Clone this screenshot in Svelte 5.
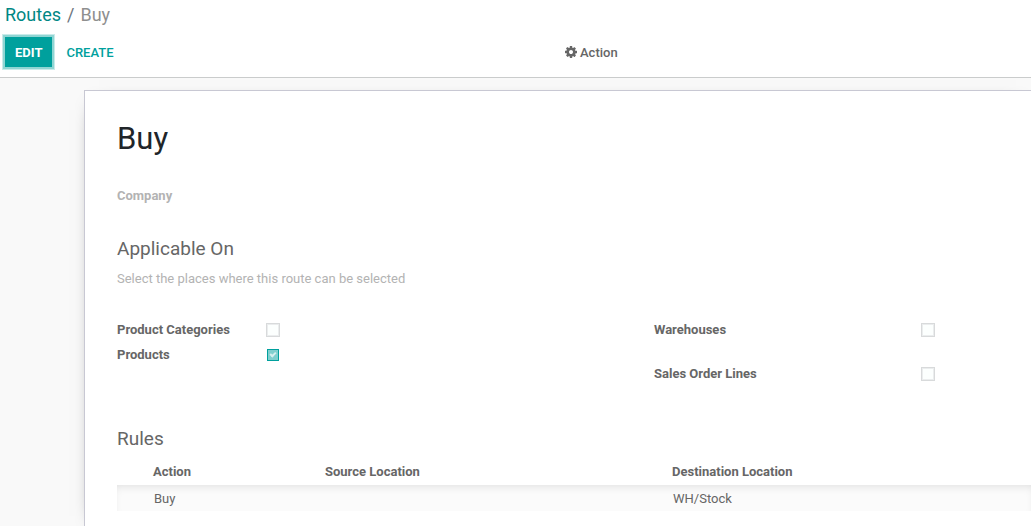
<script lang="ts">
  interface Toggle {
    id: string;
    label: string;
    checked: boolean;
  }

  const productToggles: Toggle[] = [
    { id: 'product_categ_selectable', label: 'Product Categories', checked: false },
    { id: 'product_selectable', label: 'Products', checked: true },
  ];

  const salesToggles: Toggle[] = [
    { id: 'warehouse_selectable', label: 'Warehouses', checked: false },
    { id: 'sale_selectable', label: 'Sales Order Lines', checked: false },
  ];

  const rules = [{ action: 'Buy', source: '', destination: 'WH/Stock' }];
</script>

{#snippet toggleRow(t: Toggle)}
  <div class="field">
    <label for={t.id}>{t.label}</label>
    <input id={t.id} type="checkbox" checked={t.checked} />
  </div>
{/snippet}

<div class="view">
  <header class="control-panel">
    <nav class="breadcrumb">
      <a href="#routes">Routes</a>
      <span class="sep">/</span>
      <span class="current">Buy</span>
    </nav>
    <div class="toolbar">
      <div class="buttons">
        <button class="btn btn-primary">EDIT</button>
        <button class="btn btn-link">CREATE</button>
      </div>
      <button class="btn btn-action">
        <svg viewBox="0 0 1536 1536" width="12" height="12" aria-hidden="true">
          <path d="M1024 768q0-106-75-181t-181-75-181 75-75 181 75 181 181 75 181-75 75-181zm512-109v222q0 12-8 23t-20 13l-185 28q-19 54-39 91 35 50 107 138 10 12 10 25t-9 23q-27 37-99 108t-94 71q-12 0-26-9l-138-108q-44 23-91 38-16 136-29 186-7 28-36 28H657q-14 0-24.500-8.500T621 1506l-28-184q-49-16-90-37l-141 107q-10 9-25 9-14 0-25-11-126-114-165-168-7-10-7-23 0-12 8-23 15-21 51-66.500t54-70.500q-27-50-41-99L29 913q-13-2-21-12.500T0 877V655q0-12 8-23t19-13l186-28q14-46 39-92-40-57-107-138-10-12-10-24 0-10 9-23 26-36 98.500-107.500T337 135q13 0 26 10l138 107q44-23 91-38 16-136 29-186 7-28 36-28h222q14 0 24.500 8.500T915 30l28 184q49 16 90 37l142-107q9-9 24-9 13 0 25 10 129 119 165 170 7 8 7 22 0 12-8 23-15 21-51 66.500t-54 70.500q26 50 41 98l183 28q13 2 21 12.500t8 23.500z" />
        </svg>
        Action
      </button>
    </div>
  </header>

  <main class="content">
    <section class="sheet">
      <h1>Buy</h1>
      <div class="company">Company</div>

      <h2>Applicable On</h2>
      <p class="hint">Select the places where this route can be selected</p>

      <div class="groups">
        <div class="group group-products">
          {#each productToggles as t}
            {@render toggleRow(t)}
          {/each}
        </div>
        <div class="group group-sales">
          {#each salesToggles as t}
            {@render toggleRow(t)}
          {/each}
        </div>
      </div>

      <h2>Rules</h2>
      <table>
        <colgroup>
          <col class="col-handle" />
          <col class="col-action" />
          <col class="col-source" />
          <col />
        </colgroup>
        <thead>
          <tr>
            <th></th>
            <th>Action</th>
            <th>Source Location</th>
            <th>Destination Location</th>
          </tr>
        </thead>
        <tbody>
          {#each rules as rule}
            <tr>
              <td></td>
              <td>{rule.action}</td>
              <td>{rule.source}</td>
              <td>{rule.destination}</td>
            </tr>
          {/each}
        </tbody>
      </table>
    </section>
  </main>
</div>

<style>
  :global(body) {
    margin: 0;
    background: #fff;
  }
  .view {
    display: flex;
    flex-direction: column;
    min-height: 100vh;
    font-family: Roboto, "Liberation Sans", sans-serif;
    font-size: 13px;
    line-height: 20px;
    color: #666;
  }

  .control-panel {
    padding: 2px 5px 10px;
    border-bottom: 1px solid #cacccc;
    background: #fff;
  }
  .breadcrumb {
    display: flex;
    gap: 6px;
    margin-bottom: 9px;
    font-size: 18px;
    line-height: 26px;
  }
  .breadcrumb a {
    color: #008784;
    text-decoration: none;
  }
  .sep { color: #6c757d; }
  .current { color: #8f8f8f; }
  .toolbar {
    display: grid;
    grid-template-columns: 560fr 461fr;
    align-items: center;
  }
  .buttons {
    display: flex;
    gap: 4px;
  }
  .btn {
    height: 30px;
    padding: 0 10px;
    border: none;
    background: none;
    font-family: inherit;
    font-size: 13px;
    font-weight: 500;
    cursor: pointer;
  }
  .btn-primary {
    background: #00a09d;
    color: #fff;
    font-weight: 700;
    box-shadow: 0 0 0 2px #8fd5d3, 0 0 0 3px #c9ebea;
  }
  .btn-link { color: #00a09d; }
  .btn-action {
    display: flex;
    align-items: center;
    justify-self: start;
    gap: 3px;
    padding: 0;
    color: #666;
  }
  .btn-action svg { fill: #666; }

  .content {
    display: flex;
    flex: 1;
    flex-direction: column;
    padding: 12px 0 0 84px;
    background: #f9f9f9;
    overflow: hidden;
  }
  .sheet {
    flex: 1;
    padding: 25px 0 14px 32px;
    border: 1px solid #c8c8d3;
    border-width: 1px 0 0 1px;
    background: #fff;
    box-shadow: 0 5px 20px -15px #000;
  }
  h1 {
    margin: 0 0 27px;
    font-size: 31px;
    font-weight: 400;
    line-height: 46px;
    color: #212529;
  }
  .company {
    margin-bottom: 31px;
    font-weight: 700;
    line-height: 14px;
    color: #b3b3b3;
  }
  h2 {
    margin: 0;
    font-size: 19px;
    font-weight: 400;
    line-height: 30px;
    color: #666;
  }
  .hint {
    margin: 5px 0 31px;
    color: #b3b3b3;
  }

  .groups {
    display: grid;
    grid-template-columns: 537fr 377fr;
    margin-bottom: 40px;
  }
  .group {
    display: grid;
    align-content: start;
  }
  .group-products { gap: 5px; }
  .group-sales { gap: 24px; }
  .field {
    display: grid;
    grid-template-columns: 149px 1fr;
    align-items: center;
    height: 20px;
  }
  .group-sales .field { grid-template-columns: 267px 1fr; }
  .field label { font-weight: 700; }
  input[type="checkbox"] {
    position: relative;
    appearance: none;
    width: 14px;
    height: 14px;
    margin: 0;
    border: 1px solid #d8dadb;
    background: #fcfffe;
    box-shadow: inset 0 0 0 1px #ebedee;
  }
  input[type="checkbox"]:checked {
    width: 12px;
    height: 12px;
    margin-left: 1px;
    border-color: #00a09d;
    background: #7fcfce;
    box-shadow: none;
  }
  input[type="checkbox"]:checked::after {
    content: "";
    position: absolute;
    left: 2px;
    top: 2px;
    width: 4px;
    height: 2px;
    border: solid #d5efee;
    border-width: 0 0 2px 2px;
    transform: rotate(-45deg);
  }

  table {
    width: 100%;
    border-collapse: collapse;
    table-layout: fixed;
  }
  .col-handle { width: 36px; }
  .col-action { width: 172px; }
  .col-source { width: 347px; }
  th, td {
    padding: 4px 0 2px;
    text-align: left;
  }
  th {
    padding: 8px 0 3px;
    font-weight: 700;
  }
  td + td { padding-left: 1px; }
  tbody tr {
    background: #fbfbfb;
    box-shadow: inset 0 5px 10px -4px rgba(0, 0, 0, 0.12);
  }
</style>
